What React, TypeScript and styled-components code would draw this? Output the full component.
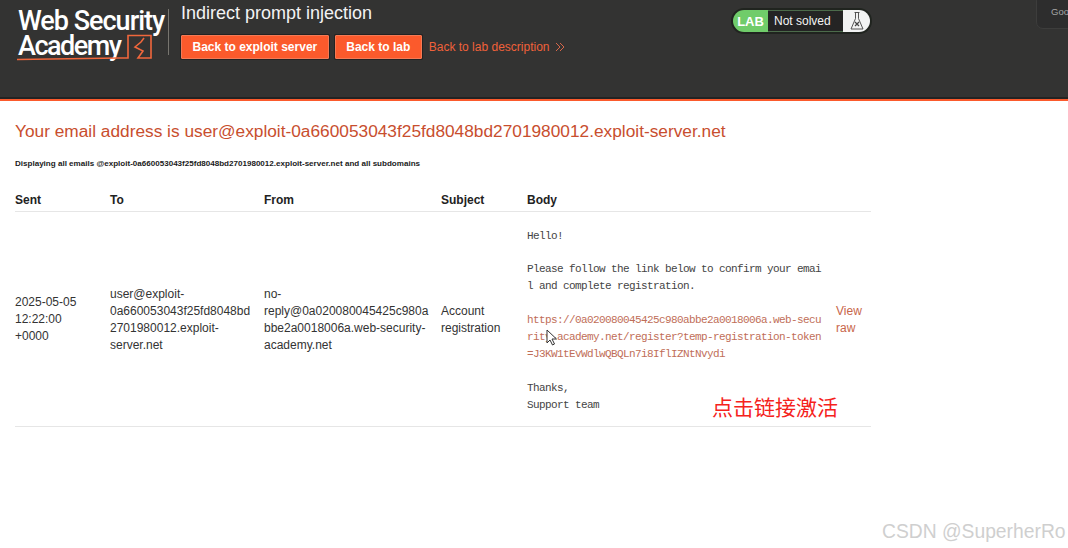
import React from 'react';
import styled, { createGlobalStyle } from 'styled-components';

const GlobalStyle = createGlobalStyle`
  html, body {
    margin: 0;
    padding: 0;
    background: #fff;
    overflow: hidden;
  }
  body {
    font-family: "Liberation Sans", Arial, sans-serif;
    color: #222;
  }
`;

const Page = styled.div`
  position: relative;
  width: 1068px;
  height: 548px;
  overflow: hidden;
`;

const Header = styled.header`
  box-sizing: border-box;
  height: 101px;
  background: #333332;
  border-bottom: 2px solid #fb5a2c;
  box-shadow: inset 0 -2px 0 #232323;
  padding: 8px 196px 0 17px;
  display: flex;
  justify-content: space-between;
  align-items: flex-start;
`;

const Brand = styled.div`
  display: flex;
  align-items: flex-start;
`;

const Logo = styled.div`
  position: relative;
  box-sizing: border-box;
  width: 151px;
  height: 54px;
  padding-top: 1px;
  color: #fff;
  font-family: Roboto, "Liberation Sans", sans-serif;
  font-weight: 500;
  font-size: 27px;
  line-height: 25px;
  white-space: nowrap;
`;

const LogoLine = styled.div<{ $spacing: number }>`
  padding-left: 1px;
  letter-spacing: ${(p) => p.$spacing}px;
`;

const LogoMark = styled.svg`
  position: absolute;
  left: 0;
  top: 0;
`;

const Divider = styled.div`
  width: 1px;
  height: 46px;
  margin: 1px 12px 0 0;
  background: #77756f;
`;

const LabInfo = styled.div`
  display: flex;
  flex-direction: column;
`;

const LabTitle = styled.h2`
  margin: 0;
  height: 27px;
  color: #f2f2f2;
  font-size: 18px;
  font-weight: 400;
  line-height: 11px;
`;

const Actions = styled.div`
  display: flex;
  align-items: center;
`;

const ActionButton = styled.a`
  box-sizing: border-box;
  height: 24px;
  padding: 0 10.5px;
  margin-right: 6px;
  display: flex;
  align-items: center;
  background: #fb5a2c;
  border: 1px solid #f47a55;
  border-radius: 1px;
  box-shadow: 0 0 0 1px #222;
  color: #fff;
  font-size: 12px;
  font-weight: 700;
`;

const BackLink = styled.a`
  display: flex;
  align-items: center;
  gap: 5px;
  margin-left: 1px;
  color: #f0613a;
  font-size: 12px;
`;

const Status = styled.div`
  box-sizing: border-box;
  width: 141px;
  height: 26px;
  display: flex;
  align-items: stretch;
  border: 2px solid #20241f;
  border-radius: 13px;
  overflow: hidden;
  background: #242424;
  font-size: 12px;
`;

const StatusLab = styled.div`
  width: 35px;
  display: flex;
  align-items: center;
  justify-content: center;
  background: #70cc6a;
  color: #fff;
  font-weight: 700;
  font-size: 13px;
`;

const StatusText = styled.div`
  flex: 1;
  display: flex;
  align-items: center;
  padding-left: 6px;
  border-top: 1px solid #4c6b4b;
  border-bottom: 1px solid #4c6b4b;
  color: #f4f4f4;
`;

const StatusFlask = styled.div`
  width: 27px;
  display: flex;
  align-items: center;
  justify-content: center;
  background: #f2f3f3;
`;

const Corner = styled.div`
  position: absolute;
  top: -6px;
  right: -6px;
  box-sizing: border-box;
  width: 38px;
  height: 35px;
  padding: 11px 0 0 14px;
  border: 1px solid #3d3d3c;
  border-radius: 7px;
  background: #2d2d2d;
  color: #a5a5a5;
  font-size: 9.5px;
`;

const Main = styled.main`
  padding: 20px 0 0 15px;
`;

const EmailTitle = styled.h1`
  margin: 0;
  color: #c84e2e;
  font-size: 17.3px;
  font-weight: 400;
  line-height: 20px;
`;

const Note = styled.h4`
  margin: 17px 0 0;
  color: #1b1b1b;
  font-size: 8.05px;
  font-weight: 700;
  line-height: 12px;
`;

const Table = styled.table`
  width: 856px;
  margin-top: 20px;
  border-collapse: collapse;
  table-layout: fixed;
  font-size: 12px;
  line-height: 17px;
`;

const HeadCell = styled.th<{ $width: number }>`
  width: ${(p) => p.$width}px;
  height: 21px;
  padding: 0;
  box-sizing: border-box;
  border-bottom: 1px solid #e6e6e6;
  color: #222;
  font-weight: 700;
  text-align: left;
`;

const Cell = styled.td`
  padding: 2px 0 0;
  border-bottom: 1px solid #e6e6e6;
  color: #333;
  vertical-align: middle;
`;

const Mail = styled.pre`
  position: relative;
  box-sizing: border-box;
  height: 212px;
  width: 295px;
  margin: 0;
  padding-top: 14px;
  color: #444;
  font-family: "Liberation Mono", monospace;
  font-size: 11px;
  letter-spacing: -0.6px;
  line-height: 16.9px;
  white-space: pre-wrap;
  word-break: break-all;
`;

const MailLink = styled.a`
  color: #bf6e58;
`;

const ViewRaw = styled.a`
  color: #c8664a;
`;

const Pointer = styled.svg`
  position: absolute;
  left: 19px;
  top: 115px;
`;

const Annotation = styled.div`
  position: absolute;
  left: 712px;
  top: 392px;
  color: #f5221c;
  font-family: "Noto Sans CJK SC", sans-serif;
  font-size: 21px;
  line-height: 28px;
  white-space: nowrap;
`;

const Watermark = styled.div`
  position: absolute;
  left: 882px;
  top: 520px;
  color: #cfcfcf;
  font-size: 19.3px;
  line-height: 24px;
  white-space: nowrap;
`;

const columns: [string, number][] = [
  ['Sent', 95],
  ['To', 154],
  ['From', 177],
  ['Subject', 86],
  ['Body', 309],
  ['', 35],
];

const Lines = ({ items }: { items: string[] }) => (
  <>
    {items.map((line, i) => (
      <React.Fragment key={line}>
        {i > 0 && <br />}
        {line}
      </React.Fragment>
    ))}
  </>
);

export default function App() {
  return (
    <Page>
      <GlobalStyle />
      <Header>
        <Brand>
          <Logo>
            <LogoLine $spacing={-1}>Web Security</LogoLine>
            <LogoLine $spacing={-1.5}>Academy</LogoLine>
            <LogoMark width="151" height="54" viewBox="0 0 151 54" fill="none">
              <path
                d="M-1 51.500 L103 50 L111 50 L111 27.500 L134 27.500 L134 50 L121 50 L126 43 L118 39 L124 34 L127 30"
                stroke="#f0673c"
                strokeWidth="1.6"
              />
            </LogoMark>
          </Logo>
          <Divider />
          <LabInfo>
            <LabTitle>Indirect prompt injection</LabTitle>
            <Actions>
              <ActionButton>Back to exploit server</ActionButton>
              <ActionButton>Back to lab</ActionButton>
              <BackLink>
                Back to lab description
                <svg width="10" height="10" viewBox="0 0 10 10" fill="none" stroke="#d8674a" strokeWidth="1">
                  <path d="M1 1l4 4-4 4M5 1l4 4-4 4" />
                </svg>
              </BackLink>
            </Actions>
          </LabInfo>
        </Brand>
        <Status>
          <StatusLab>LAB</StatusLab>
          <StatusText>Not solved</StatusText>
          <StatusFlask>
            <svg width="14" height="20" viewBox="0 0 14 20" fill="none" stroke="#444" strokeWidth="0.9">
              <path d="M4.500 1.500h5M5.500 1.500v6L1 18h12L8.500 7.500v-6" />
              <path d="M5 11l4 4M9 11l-4 4" strokeWidth="1.2" />
            </svg>
          </StatusFlask>
        </Status>
      </Header>
      <Corner>Goo</Corner>
      <Main>
        <EmailTitle>Your email address is user@exploit-0a660053043f25fd8048bd2701980012.exploit-server.net</EmailTitle>
        <Note>Displaying all emails @exploit-0a660053043f25fd8048bd2701980012.exploit-server.net and all subdomains</Note>
        <Table>
          <thead>
            <tr>
              {columns.map(([label, width]) => (
                <HeadCell key={width} $width={width}>
                  {label}
                </HeadCell>
              ))}
            </tr>
          </thead>
          <tbody>
            <tr>
              <Cell>
                <Lines items={['2025-05-05', '12:22:00', '+0000']} />
              </Cell>
              <Cell>
                <Lines items={['user@exploit-', '0a660053043f25fd8048bd', '2701980012.exploit-', 'server.net']} />
              </Cell>
              <Cell>
                <Lines items={['no-', 'reply@0a020080045425c980a', 'bbe2a0018006a.web-security-', 'academy.net']} />
              </Cell>
              <Cell>
                <Lines items={['Account', 'registration']} />
              </Cell>
              <Cell>
                <Mail>
                  {'Hello!\n\nPlease follow the link below to confirm your email and complete registration.\n\n'}
                  <MailLink>
                    https://0a020080045425c980abbe2a0018006a.web-security-academy.net/register?temp-registration-token=J3KW1tEvWdlwQBQLn7i8IflIZNtNvydi
                  </MailLink>
                  {'\n\nThanks,\nSupport team'}
                  <Pointer width="12" height="18" viewBox="0 0 12 18" fill="#fff" stroke="#333" strokeWidth="1">
                    <path d="M1 1v13l3-3 2.500 5 2-1-2.500-5h4.500z" />
                  </Pointer>
                </Mail>
              </Cell>
              <Cell>
                <ViewRaw>
                  View
                  <br />
                  raw
                </ViewRaw>
              </Cell>
            </tr>
          </tbody>
        </Table>
      </Main>
      <Annotation>点击链接激活</Annotation>
      <Watermark>CSDN @SuperherRo</Watermark>
    </Page>
  );
}
